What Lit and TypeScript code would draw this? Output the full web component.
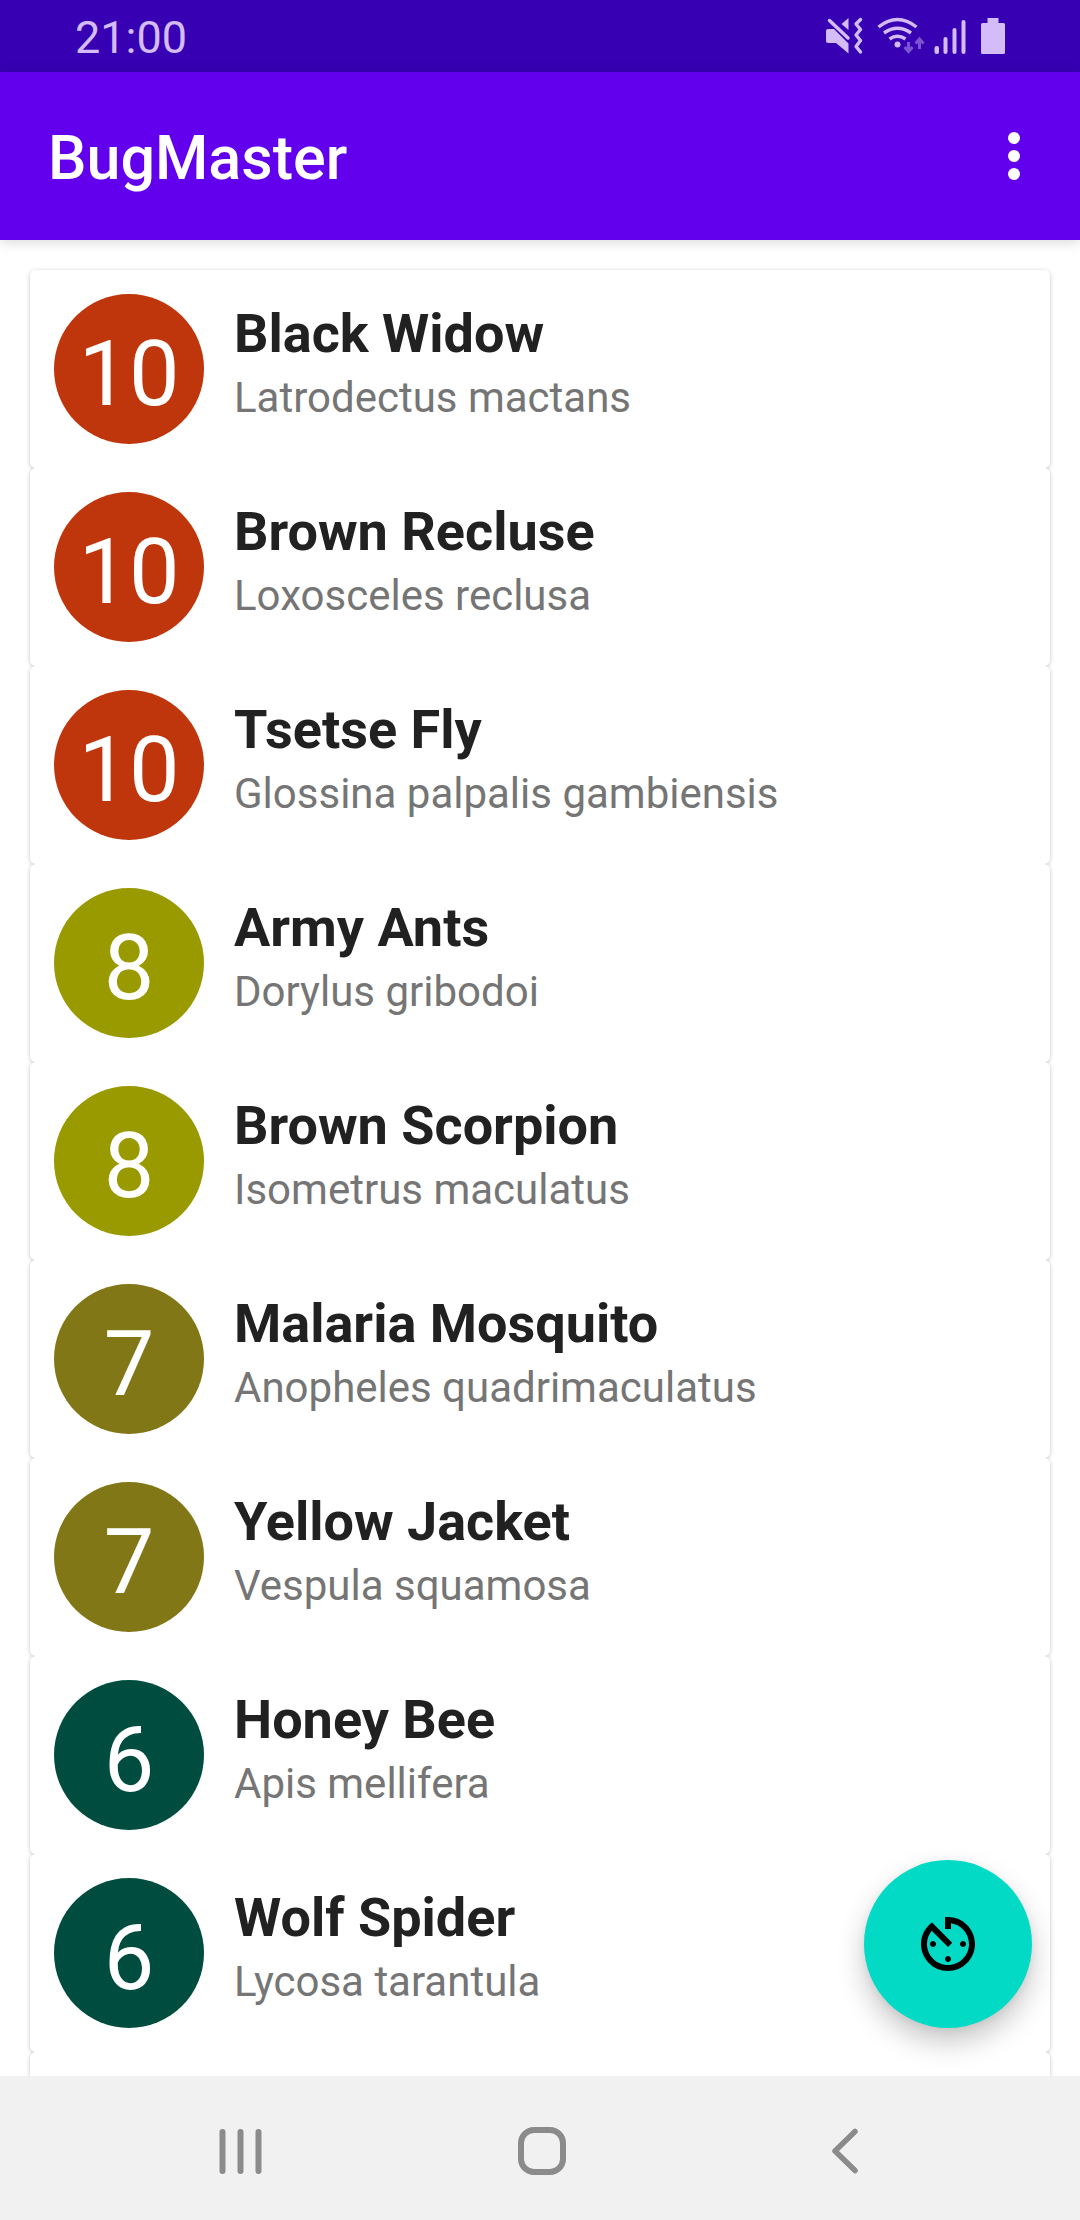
import { LitElement, html, css, nothing } from "lit";
import { customElement, property } from "lit/decorators.js";

interface Bug {
  name: string;
  latin: string;
  danger: number;
}

const BUGS: Bug[] = [
  { name: "Black Widow", latin: "Latrodectus mactans", danger: 10 },
  { name: "Brown Recluse", latin: "Loxosceles reclusa", danger: 10 },
  { name: "Tsetse Fly", latin: "Glossina palpalis gambiensis", danger: 10 },
  { name: "Army Ants", latin: "Dorylus gribodoi", danger: 8 },
  { name: "Brown Scorpion", latin: "Isometrus maculatus", danger: 8 },
  { name: "Malaria Mosquito", latin: "Anopheles quadrimaculatus", danger: 7 },
  { name: "Yellow Jacket", latin: "Vespula squamosa", danger: 7 },
  { name: "Honey Bee", latin: "Apis mellifera", danger: 6 },
  { name: "Wolf Spider", latin: "Lycosa tarantula", danger: 6 },
];

@customElement("status-bar")
export class StatusBar extends LitElement {
  static styles = css`
    :host {
      display: flex;
      flex: none;
      align-items: center;
      justify-content: space-between;
      height: 72px;
      padding: 0 72px 0 75px;
      background: #3700b3;
      color: #d3bcf7;
    }
    .clock {
      font-size: 45px;
      line-height: 53px;
      padding-top: 2px;
    }
    .icons {
      display: block;
      width: 184px;
      height: 72px;
    }
    .faint {
      opacity: 0.45;
    }
  `;

  render() {
    return html`
      <time class="clock">21:00</time>
      <svg class="icons" viewBox="824 0 184 72" fill="currentColor" aria-hidden="true">
        <path d="M828 29h6l14.500 14.500V53.500L836 43h-8q-2 0-2-2V31q0-2 2-2z" />
        <path d="M841.500 24l7-6v12z" />
        <path d="M829.500 20.500L848 38" fill="none" stroke="currentColor" stroke-width="3.500" stroke-linecap="round" />
        <path
          d="M860.500 19.500l-4.500 4.500 4.500 5.500-4.500 5.500 4.500 5.500-4.500 6 4.500 5.500"
          fill="none" stroke="currentColor" stroke-width="3.400" stroke-linecap="round" stroke-linejoin="round"
        />
        <g fill="none" stroke="currentColor" stroke-width="3.400">
          <path d="M878.500 27q19-15 38 0" />
          <path d="M884 33q13.500-9.500 27 0" />
          <path d="M889.500 39q8-5.500 16 0" />
        </g>
        <circle cx="897.500" cy="44.500" r="3" />
        <path
          class="faint"
          d="M908.500 42v9m-4-4l4 4.500 4-4.500M919.500 49v-9.500m-4 4l4-4.500 4 4.500"
          fill="none" stroke="currentColor" stroke-width="3"
        />
        <rect x="934.500" y="46" width="4.500" height="8" rx="2" />
        <rect x="943.500" y="37" width="4" height="17" rx="2" />
        <rect x="952.500" y="28" width="4" height="26" rx="2" />
        <rect x="961.500" y="20" width="4" height="34" rx="2" />
        <path d="M987.500 18h11v5h5q1.500 0 1.500 1.500v28q0 1.500-1.500 1.500h-21q-1.500 0-1.500-1.500v-28q0-1.500 1.500-1.500h5z" />
      </svg>
    `;
  }
}

@customElement("bug-card")
export class BugCard extends LitElement {
  @property({ attribute: false }) bug?: Bug;

  static styles = css`
    :host {
      display: block;
      border-radius: 6px;
      box-shadow: 0 1px 4px rgba(0, 0, 0, 0.24);
    }
    .surface {
      position: relative;
      z-index: 1;
      display: flex;
      gap: 30px;
      min-height: 150px;
      padding: 24px;
      border-radius: 6px;
      background: #fff;
    }
    .level {
      box-sizing: border-box;
      flex: none;
      display: flex;
      align-items: center;
      justify-content: center;
      width: 150px;
      height: 150px;
      padding-top: 12px;
      border-radius: 50%;
      color: #fff;
      font-size: 90px;
      line-height: 106px;
    }
    .level-10 {
      background: #bf360c;
    }
    .level-8 {
      background: #999900;
    }
    .level-7 {
      background: #827717;
    }
    .level-6 {
      background: #004d40;
    }
    .names {
      display: flex;
      flex-direction: column;
      gap: 8px;
      min-width: 0;
      padding-top: 8px;
    }
    .name {
      margin: 0;
      color: #212121;
      font-size: 54px;
      font-weight: 700;
      line-height: 63px;
    }
    .latin {
      margin: 0;
      color: #757575;
      font-size: 42px;
      line-height: 49px;
    }
  `;

  render() {
    const bug = this.bug;
    return html`<article class="surface">
      ${bug
        ? html`<div class="level level-${bug.danger}">${bug.danger}</div>
            <div class="names">
              <h2 class="name">${bug.name}</h2>
              <p class="latin">${bug.latin}</p>
            </div>`
        : nothing}
    </article>`;
  }
}

@customElement("app-root")
export class AppRoot extends LitElement {
  static styles = css`
    :host {
      display: flex;
      flex-direction: column;
      height: 100vh;
      overflow: hidden;
      background: #fff;
      font-family: Roboto, "Liberation Sans", sans-serif;
    }
    button {
      display: flex;
      align-items: center;
      justify-content: center;
      margin: 0;
      padding: 0;
      border: 0;
      background: none;
      color: inherit;
      cursor: pointer;
    }
    svg {
      display: block;
    }
    .app-bar {
      position: relative;
      z-index: 2;
      flex: none;
      display: flex;
      align-items: center;
      justify-content: space-between;
      height: 168px;
      padding: 0 30px 0 48px;
      background: #6200ee;
      color: #fff;
      box-shadow: 0 2px 12px rgba(0, 0, 0, 0.16);
    }
    .title {
      margin: 0;
      padding-top: 4px;
      font-size: 61px;
      font-weight: 500;
      line-height: 70px;
    }
    .icon {
      width: 72px;
      height: 72px;
    }
    .content {
      position: relative;
      z-index: 1;
      flex: 1;
      min-height: 0;
      display: flex;
    }
    .list {
      flex: 1;
      margin: 0;
      padding: 30px;
      list-style: none;
      overflow-y: auto;
      scrollbar-width: none;
    }
    .fab {
      position: absolute;
      z-index: 2;
      right: 48px;
      bottom: 48px;
      width: 168px;
      height: 168px;
      border-radius: 50%;
      background: #03dac5;
      color: #000;
      box-shadow: 0 14px 28px rgba(0, 0, 0, 0.22), 0 2px 8px rgba(0, 0, 0, 0.06);
    }
    .nav {
      position: relative;
      z-index: 2;
      flex: none;
      display: grid;
      grid-template-columns: repeat(3, 1fr);
      height: 144px;
      padding: 6px 86px 0 90px;
      box-sizing: border-box;
      background: #f1f1f1;
      color: #8b8b8b;
    }
  `;

  render() {
    return html`
      <status-bar></status-bar>
      <header class="app-bar">
        <h1 class="title">BugMaster</h1>
        <button type="button" aria-label="More options">
          <svg class="icon" viewBox="0 0 24 24" fill="currentColor">
            <circle cx="12" cy="6" r="2" />
            <circle cx="12" cy="12" r="2" />
            <circle cx="12" cy="18" r="2" />
          </svg>
        </button>
      </header>
      <main class="content">
        <ul class="list">
          ${BUGS.map((bug) => html`<li><bug-card .bug=${bug}></bug-card></li>`)}
          <li><bug-card></bug-card></li>
        </ul>
        <button class="fab" type="button" aria-label="Sort by danger">
          <svg class="icon" viewBox="0 0 24 24" fill="currentColor">
            <path
              d="M11 17c0 .55.45 1 1 1s1-.45 1-1-.45-1-1-1-1 .45-1 1zm0-14v4h2V5.080c3.390.49 6 3.390 6 6.920 0 3.870-3.130 7-7 7s-7-3.130-7-7c0-1.680.59-3.220 1.580-4.420L12 13l1.410-1.410-6.800-6.800v.02C4.420 6.450 3 9.050 3 12c0 4.970 4.020 9 9 9 4.970 0 9-4.030 9-9s-4.030-9-9-9h-1zm7 9c0-.55-.45-1-1-1s-1 .45-1 1 .45 1 1 1 1-.45 1-1zM6 12c0 .55.45 1 1 1s1-.45 1-1-.45-1-1-1-1 .45-1 1z"
            />
          </svg>
        </button>
      </main>
      <nav class="nav">
        <button type="button" aria-label="Recent apps">
          <svg class="icon" viewBox="0 0 72 72" fill="none" stroke="currentColor" stroke-width="6" stroke-linecap="round">
            <path d="M17.500 17v39M35.500 17v39M53.500 17v39" />
          </svg>
        </button>
        <button type="button" aria-label="Home">
          <svg class="icon" viewBox="0 0 72 72" fill="none" stroke="currentColor" stroke-width="6">
            <rect x="15" y="15" width="42" height="42" rx="13" />
          </svg>
        </button>
        <button type="button" aria-label="Back">
          <svg class="icon" viewBox="0 0 72 72" fill="none" stroke="currentColor" stroke-width="5.500" stroke-linecap="round" stroke-linejoin="round">
            <path d="M48 16.500L28 36l20 19.500" />
          </svg>
        </button>
      </nav>
    `;
  }
}
